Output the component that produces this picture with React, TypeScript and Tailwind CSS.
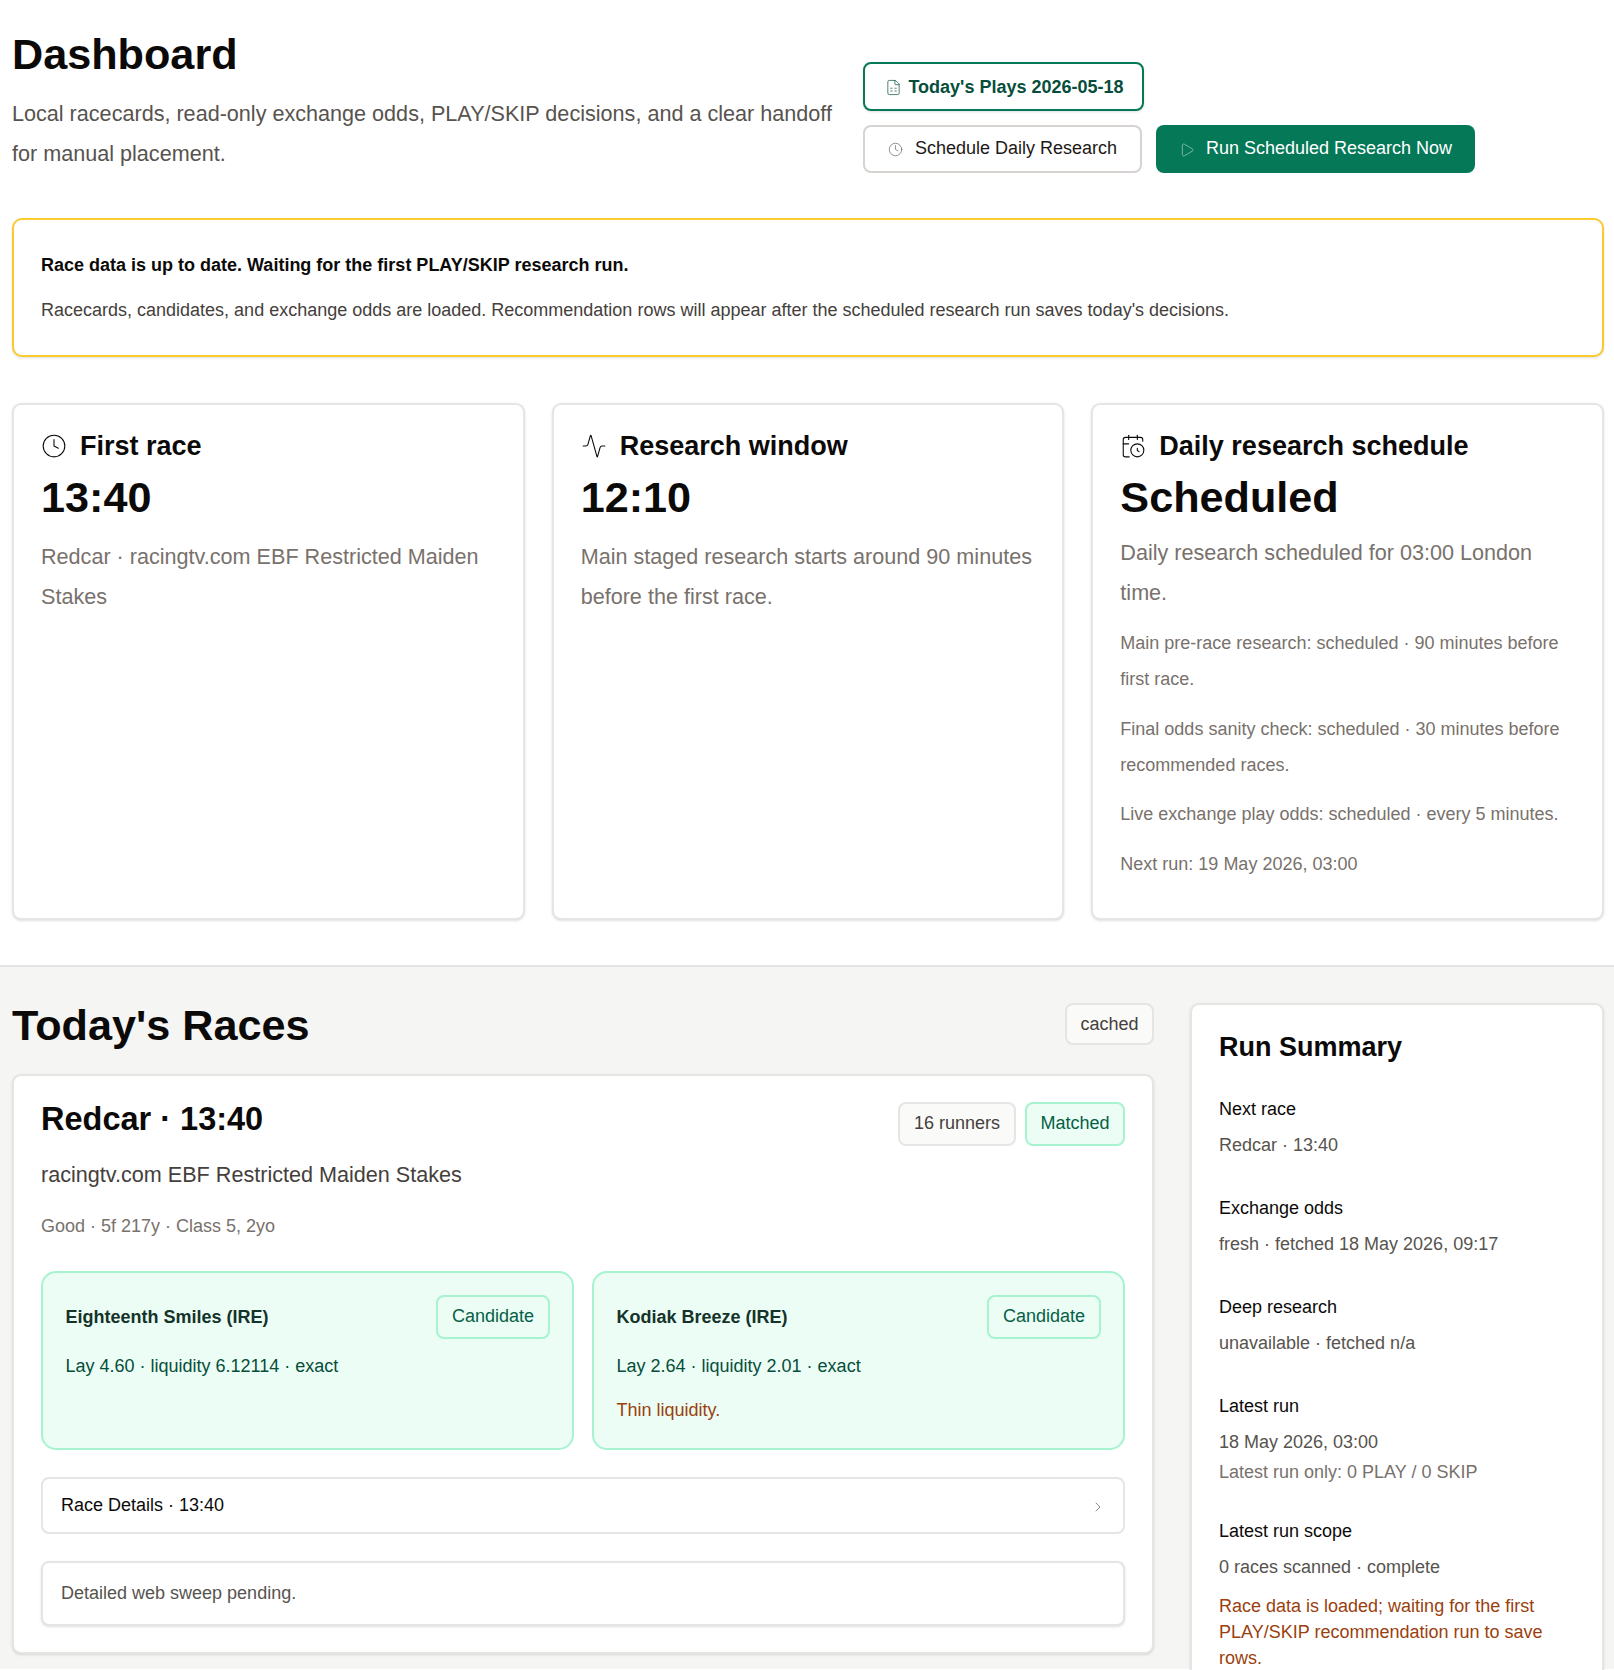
import { Activity, CalendarClock, ChevronRight, Clock, FileSpreadsheet, Play } from "lucide-react";

const sans = "font-['Liberation_Sans',Arial,sans-serif]";

function Badge({ children, green }: { children: string; green?: boolean }) {
  return (
    <span
      className={
        "inline-flex h-[44px] items-center rounded-[8px] border-2 pb-[3px] text-[18px] leading-none " +
        (green
          ? "border-[#a7f3d0] bg-[#ecfdf5] px-[13.5px] text-[#065f46]"
          : "border-[#e7e5e4] bg-[#fafaf9] px-[14px] text-[#44403c]")
      }
    >
      {children}
    </span>
  );
}

function StatCard({
  icon,
  title,
  value,
  desc,
}: {
  icon: React.ReactNode;
  title: string;
  value: string;
  desc: string;
}) {
  return (
    <div className="rounded-[9px] border-2 border-[#e7e5e4] bg-white px-[27px] pt-[24px] shadow-sm">
      <div className="flex items-center gap-[13px] text-[27px] font-bold leading-[34px] text-[#0c0a09]">
        {icon}
        <span>{title}</span>
      </div>
      <div className="mt-[9px] text-[43.2px] font-bold leading-[50px] text-[#0c0a09]">{value}</div>
      <p className="mt-[15px] text-[21.6px] leading-[40px] text-[#78716c]">{desc}</p>
    </div>
  );
}

function Candidate({ name, lay, warn }: { name: string; lay: string; warn?: string }) {
  return (
    <div className="h-[179px] rounded-[15px] border-2 border-[#a7f3d0] bg-[#ecfdf5] px-[22.5px] pt-[22px]">
      <div className="flex items-start justify-between">
        <span className="mt-[4px] text-[18px] font-bold leading-[36px] text-[#14332a]">{name}</span>
        <Badge green>Candidate</Badge>
      </div>
      <p className="mt-[9px] text-[18px] leading-[36px] text-[#064e3b]">{lay}</p>
      {warn && <p className="mt-[8px] text-[18px] leading-[36px] text-[#9a3f0e]">{warn}</p>}
    </div>
  );
}

function Summary({ label, value, children }: { label: string; value: string; children?: React.ReactNode }) {
  return (
    <div className="mt-[27px]">
      <div className="text-[18px] leading-[36px] text-[#0c0a09]">{label}</div>
      <div className="text-[18px] leading-[36px] text-[#57534e]">{value}</div>
      {children}
    </div>
  );
}

export default function App() {
  return (
    <div className={sans + " h-[1670px] overflow-hidden bg-white text-[#0c0a09]"}>
      <section className="pb-[45px] pl-[12px] pr-[10px] pt-[28px]">
        <header className="flex items-start gap-[29px]">
          <div className="w-[822px] shrink-0">
            <h1 className="text-[43.2px] font-bold leading-[52px]">Dashboard</h1>
            <p className="mt-[14px] text-[21.6px] leading-[40px] text-[#57534e]">
              Local racecards, read-only exchange odds, PLAY/SKIP decisions, and a clear handoff for manual placement.
            </p>
          </div>
          <div className="mt-[34px] flex flex-col gap-[14px]">
            <button className="flex h-[49px] w-[281px] items-center justify-center gap-[6px] rounded-[8px] border-2 border-[#047857] bg-white pl-[2px] pt-[1px] text-[18px] font-bold text-[#064e3b] shadow-sm">
              <FileSpreadsheet size={17} strokeWidth={1} />
              Today's Plays 2026-05-18
            </button>
            <div className="flex gap-[14px]">
              <button className="flex h-[48px] w-[279px] items-center justify-center gap-[12px] rounded-[8px] border-2 border-[#d6d3d1] bg-white pb-[1px] text-[18px] text-[#1c1917]">
                <Clock size={15} strokeWidth={1} className="mt-[2px] text-[#57534e]" />
                Schedule Daily Research
              </button>
              <button className="flex h-[48px] w-[319px] items-center justify-center gap-[11px] rounded-[8px] bg-[#047857] pb-[1px] text-[18px] text-white">
                <Play size={16} strokeWidth={1} className="mt-[2px] text-[#b5d5c8]" />
                Run Scheduled Research Now
              </button>
            </div>
          </div>
        </header>

        <div className="mt-[44px] h-[139px] rounded-[10px] border-2 border-[#fbcb2e] bg-white px-[27px] pt-[32px] shadow-sm">
          <p className="text-[18px] font-bold leading-[26px] text-[#0c0a09]">
            Race data is up to date. Waiting for the first PLAY/SKIP research run.
          </p>
          <p className="mt-[19px] text-[18px] leading-[26px] text-[#44403c]">
            Racecards, candidates, and exchange odds are loaded. Recommendation rows will appear after the scheduled research run saves today's decisions.
          </p>
        </div>

        <div className="mt-[46px] grid h-[517px] grid-cols-3 gap-[27px]">
          <StatCard
            icon={<Clock size={26} strokeWidth={1} />}
            title="First race"
            value="13:40"
            desc="Redcar · racingtv.com EBF Restricted Maiden Stakes"
          />
          <StatCard
            icon={<Activity size={26} strokeWidth={1} />}
            title="Research window"
            value="12:10"
            desc="Main staged research starts around 90 minutes before the first race."
          />
          <div className="rounded-[9px] border-2 border-[#e7e5e4] bg-white px-[27px] pt-[24px] shadow-sm">
            <div className="flex items-center gap-[13px] text-[27px] font-bold leading-[34px] text-[#0c0a09]">
              <CalendarClock size={26} strokeWidth={1} />
              <span>Daily research schedule</span>
            </div>
            <div className="mt-[9px] text-[43.2px] font-bold leading-[50px] text-[#0c0a09]">Scheduled</div>
            <p className="mt-[11px] text-[21.6px] leading-[40px] text-[#78716c]">
              Daily research scheduled for 03:00 London time.
            </p>
            <div className="mt-[12px] flex flex-col gap-[13.5px] text-[18px] leading-[36px] text-[#78716c]">
              <p>Main pre-race research: scheduled · 90 minutes before first race.</p>
              <p>Final odds sanity check: scheduled · 30 minutes before recommended races.</p>
              <p>Live exchange play odds: scheduled · every 5 minutes.</p>
              <p>Next run: 19 May 2026, 03:00</p>
            </div>
          </div>
        </div>
      </section>

      <section className="h-[704px] border-t-2 border-[#e7e5e4] bg-[#f5f5f4] pl-[12px] pr-[10px] pt-[36px]">
        <div className="grid grid-cols-[1142px_414px] gap-[36px]">
          <div>
            <div className="flex h-[42px] items-center justify-between">
              <h2 className="pt-[2px] text-[43.2px] font-bold leading-[42px]">Today's Races</h2>
              <span className="inline-flex h-[42px] items-center rounded-[8px] border-2 border-[#e7e5e4] bg-[#fafaf9] px-[13.5px] text-[18px] text-[#44403c]">
                cached
              </span>
            </div>

            <div className="mt-[29px] h-[580px] rounded-[9px] border-2 border-[#e7e5e4] bg-white px-[27px] pt-[26px] shadow-sm">
              <div className="flex items-start justify-between">
                <h3 className="text-[32.5px] font-bold leading-[34px]">Redcar · 13:40</h3>
                <div className="flex gap-[9px]">
                  <Badge>16 runners</Badge>
                  <Badge green>Matched</Badge>
                </div>
              </div>
              <p className="mt-[9px] text-[21.6px] leading-[40px] text-[#44403c]">
                racingtv.com EBF Restricted Maiden Stakes
              </p>
              <p className="mt-[13px] text-[18px] leading-[36px] text-[#78716c]">Good · 5f 217y · Class 5, 2yo</p>

              <div className="mt-[27px] grid grid-cols-2 gap-[18px]">
                <Candidate name="Eighteenth Smiles (IRE)" lay="Lay 4.60 · liquidity 6.12114 · exact" />
                <Candidate name="Kodiak Breeze (IRE)" lay="Lay 2.64 · liquidity 2.01 · exact" warn="Thin liquidity." />
              </div>

              <div className="mt-[27px] flex h-[57px] items-center justify-between rounded-[8px] border-2 border-[#e7e5e4] bg-white pl-[18px] pr-[17px] text-[18px] text-[#0c0a09]">
                <span>Race Details · 13:40</span>
                <ChevronRight size={16} strokeWidth={1} className="mt-[2px] text-[#57534e]" />
              </div>

              <div className="mt-[27px] flex h-[65px] items-center rounded-[8px] border-2 border-[#e7e5e4] bg-white px-[18px] text-[18px] text-[#57534e] shadow-sm">
                Detailed web sweep pending.
              </div>
            </div>
          </div>

          <aside className="h-[760px] rounded-[9px] border-2 border-[#e7e5e4] bg-white px-[27px] pt-[25px] shadow-sm">
            <h3 className="text-[27px] font-bold leading-[34px]">Run Summary</h3>
            <Summary label="Next race" value="Redcar · 13:40" />
            <Summary label="Exchange odds" value="fresh · fetched 18 May 2026, 09:17" />
            <Summary label="Deep research" value="unavailable · fetched n/a" />
            <Summary label="Latest run" value="18 May 2026, 03:00">
              <div className="pb-[2px] text-[18px] leading-[24px] text-[#78716c]">Latest run only: 0 PLAY / 0 SKIP</div>
            </Summary>
            <Summary label="Latest run scope" value="0 races scanned · complete">
              <p className="mt-[8px] text-[18px] leading-[26px] text-[#9a3f0e]">
                Race data is loaded; waiting for the first PLAY/SKIP recommendation run to save rows.
              </p>
            </Summary>
          </aside>
        </div>
      </section>
    </div>
  );
}
